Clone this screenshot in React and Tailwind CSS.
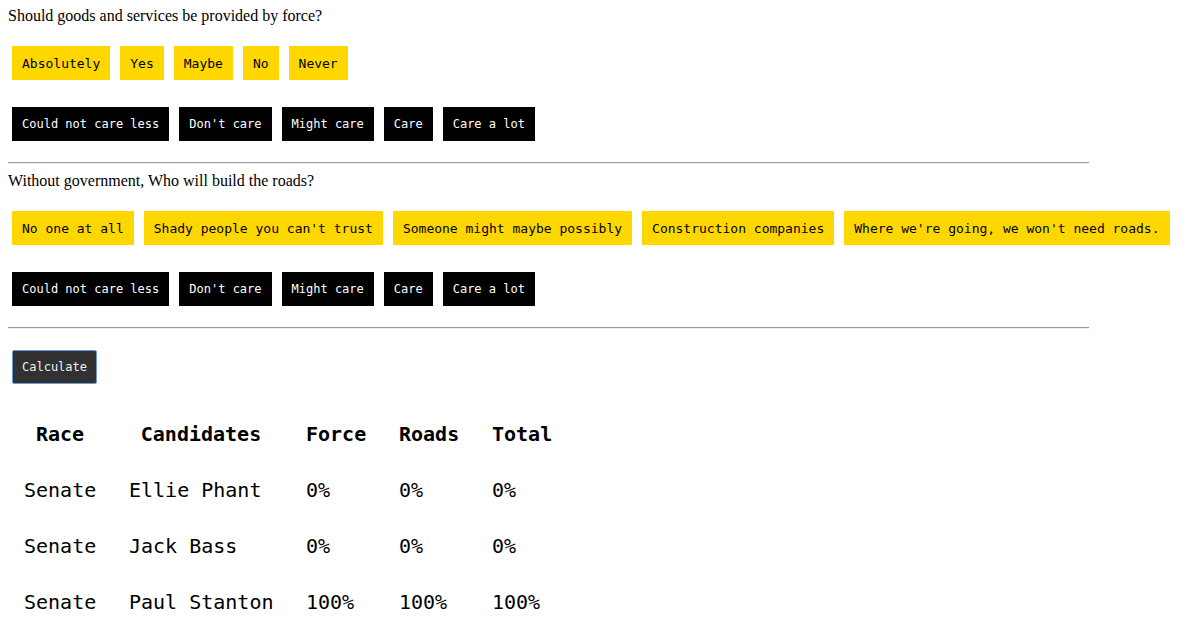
import React from 'react';

const forceAnswers = ['Absolutely', 'Yes', 'Maybe', 'No', 'Never'];
const roadAnswers = [
  'No one at all',
  "Shady people you can't trust",
  'Someone might maybe possibly',
  'Construction companies',
  "Where we're going, we won't need roads.",
];
const careLevels = ['Could not care less', "Don't care", 'Might care', 'Care', 'Care a lot'];

const results = [
  { race: 'Senate', name: 'Ellie Phant', force: '0%', roads: '0%', total: '0%' },
  { race: 'Senate', name: 'Jack Bass', force: '0%', roads: '0%', total: '0%' },
  { race: 'Senate', name: 'Paul Stanton', force: '100%', roads: '100%', total: '100%' },
];

const mono = "font-['DejaVu_Sans_Mono',monospace]";

const AnswerRow = ({ items }) => (
  <div className="flex gap-[10px] pl-1">
    {items.map((item) => (
      <button
        key={item}
        className={`${mono} h-[34px] px-[10px] pt-px bg-[#ffd700] text-black text-[13px] whitespace-pre flex items-center`}
      >
        {item}
      </button>
    ))}
  </div>
);

const CareRow = () => (
  <div className="flex gap-[10px] pl-1">
    {careLevels.map((item) => (
      <button
        key={item}
        className={`${mono} h-[34px] px-[10px] bg-black text-white text-[12px] whitespace-pre flex items-center`}
      >
        {item}
      </button>
    ))}
  </div>
);

const Divider = () => <div className="w-[1081px] border-t border-[#9a9a9a] border-b border-b-[#eeeeee]" />;

export default function App() {
  return (
    <div className="px-2 pt-[7px] bg-white text-black font-['Liberation_Serif',serif] text-[16px] min-h-[642px]">
      <div className="leading-[18px]">Should goods and services be provided by force?</div>
      <div className="mt-[21px]">
        <AnswerRow items={forceAnswers} />
      </div>
      <div className="mt-[27px]">
        <CareRow />
      </div>
      <div className="mt-[21px]">
        <Divider />
      </div>
      <div className="mt-[8px] leading-[18px]">Without government, Who will build the roads?</div>
      <div className="mt-[21px]">
        <AnswerRow items={roadAnswers} />
      </div>
      <div className="mt-[27px]">
        <CareRow />
      </div>
      <div className="mt-[21px]">
        <Divider />
      </div>
      <div className="mt-[21px] pl-1">
        <button
          className={`${mono} h-[34px] px-[9px] bg-[#313131] text-[#f0f0f0] text-[12px] border border-[#6b96e0] rounded-[2px] flex items-center`}
        >
          Calculate
        </button>
      </div>
      <div
        className={`${mono} mt-[22px] ml-4 text-[20px] grid grid-cols-[72px_144px_60px_60px_60px] gap-x-[33px] auto-rows-[56px] items-center`}
      >
        <div className="font-bold text-center">Race</div>
        <div className="font-bold text-center">Candidates</div>
        <div className="font-bold text-center">Force</div>
        <div className="font-bold text-center">Roads</div>
        <div className="font-bold text-center">Total</div>
        {results.map((r) => (
          <React.Fragment key={r.name}>
            <div>{r.race}</div>
            <div className="whitespace-pre">{r.name}</div>
            <div>{r.force}</div>
            <div>{r.roads}</div>
            <div>{r.total}</div>
          </React.Fragment>
        ))}
      </div>
    </div>
  );
}
